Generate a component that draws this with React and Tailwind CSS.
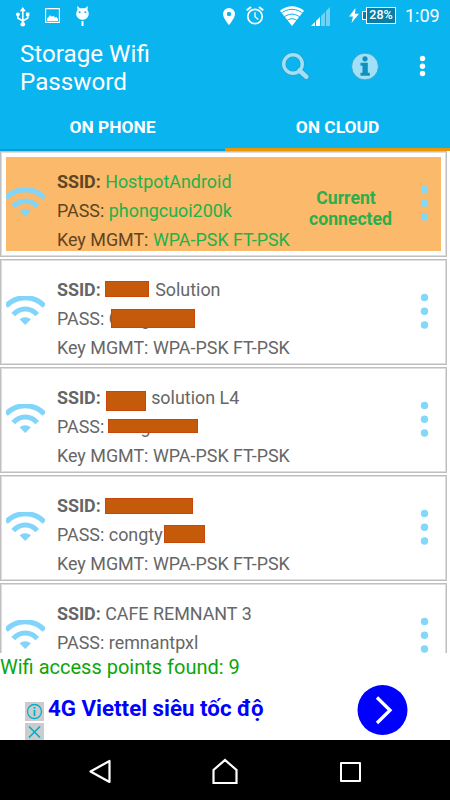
import React from "react";
import clsx from "clsx";

const networks = [
  { id: 1, ssid: "HostpotAndroid", pass: "phongcuoi200k", keyMgmt: "WPA-PSK FT-PSK", current: true },
  {
    id: 2,
    ssid: (
      <>
        <Mask box="left-0 top-[6px] w-[44px] h-[16px]" width="w-[44px]" />
        <span className="ml-[6px]">Solution</span>
      </>
    ),
    pass: <Mask box="left-[2px] top-[5px] w-[84px] h-[19px]">Cong</Mask>,
    keyMgmt: "WPA-PSK FT-PSK",
  },
  {
    id: 3,
    ssid: (
      <>
        <Mask box="left-[1px] top-[8px] w-[40px] h-[20px]" width="w-[46px]">C</Mask>
        <span>solution L4</span>
      </>
    ),
    pass: <Mask box="left-[-1px] top-[7px] w-[90px] h-[14px]">Cong</Mask>,
    keyMgmt: "WPA-PSK FT-PSK",
  },
  {
    id: 4,
    ssid: <Mask box="left-0 top-[7px] w-[88px] h-[16px]" width="w-[88px]" />,
    pass: (
      <>
        <span>congty</span>
        <Mask box="left-[1px] top-[5px] w-[41px] h-[18px]" width="w-[42px]" />
      </>
    ),
    keyMgmt: "WPA-PSK FT-PSK",
  },
  { id: 5, ssid: "CAFE REMNANT 3", pass: "remnantpxl" },
];

// Solid block that hides a private part of a name or password
function Mask({ box, width, children }) {
  return (
    <span className={clsx("relative inline-block h-[29px] align-top", width)}>
      {children}
      <span className={clsx("absolute border border-[#c8480a] bg-[#c45a0a]", box)} />
    </span>
  );
}

const WifiIcon = () => (
  <svg className="w-[39px] h-[29px] shrink-0" viewBox="0 0 39 29" fill="none" stroke="#81d4fa" strokeWidth="5">
    <path d="M0 10A26.500 26.500 0 0 1 38.500 10" />
    <path d="M7.300 18.700A15.500 15.500 0 0 1 31.200 18.700" />
    <path d="M13.600 23.300A8.500 8.500 0 0 1 24.900 23.300L19.250 29z" fill="#81d4fa" stroke="none" />
  </svg>
);

const StatusBar = () => (
  <div className="flex h-[31px] shrink-0 items-center text-white">
    <svg className="ml-4 mt-[2px] w-[14px] h-5" viewBox="0 0 14 20" fill="none" stroke="currentColor" strokeWidth="1.6">
      <path d="M6.800 3v14M1.800 7.500V11l5 3 5-3V8" />
      <path d="M6.800 0l3 4.200h-6z" fill="currentColor" stroke="none" />
      <circle cx="6.800" cy="17.300" r="2.300" fill="currentColor" stroke="none" />
      <circle cx="1.900" cy="7.300" r="1.900" fill="currentColor" stroke="none" />
      <path d="M10 5.600h3.400v3.600H10z" fill="currentColor" stroke="none" />
    </svg>
    <svg className="ml-[15px] w-[15px] h-[15px]" viewBox="0 0 15 15">
      <path d="M.6.6h13.800v13.800H.6z" fill="none" stroke="currentColor" strokeWidth="1.100" />
      <path d="M2.200 13V10.400L5 7.200l2 1.600 1.400-1 1.500 1.800 1.400-.5 1.700 1.700V13z" fill="currentColor" />
    </svg>
    <svg className="ml-[15px] w-[15px] h-5" viewBox="0 0 15 20">
      <path d="M2 0l3 2.300h5L13 0l-.6 4c2 2.400 1.700 6-.5 8-2.200 2.400-6.600 2.400-8.800 0-2.200-2-2.500-5.600-.5-8z" fill="currentColor" />
      <path d="M6.500 15h2v5h-2z" fill="currentColor" />
      <circle cx="4.600" cy="6.300" r="1" fill="#0ab4ef" />
      <circle cx="10.400" cy="6.300" r="1" fill="#0ab4ef" />
    </svg>
    <svg className="ml-[133px] mt-[2px] w-3 h-[17px]" viewBox="0 0 12 17">
      <path fillRule="evenodd" d="M6 0a6 6 0 0 1 6 6c0 4.300-6 11-6 11S0 10.300 0 6a6 6 0 0 1 6-6zm0 3.800a2.200 2.200 0 1 0 0 4.400 2.200 2.200 0 0 0 0-4.400z" fill="currentColor" />
    </svg>
    <svg className="ml-[11px] w-[18px] h-[19px]" viewBox="0 0 18 19" fill="none" stroke="currentColor" strokeWidth="1.700">
      <circle cx="9" cy="10.500" r="7.200" />
      <path d="M9 6.200v4.600l3.400 2.600" strokeWidth="1.300" />
      <path d="M.7 4.300L5 .9M17.300 4.300L13 .9" strokeWidth="1.900" />
    </svg>
    <svg className="ml-4 mt-[1px] w-6 h-5" viewBox="0 0 24 20">
      <path d="M0 4.800C6.800-1.400 17.200-1.400 24 4.800L12 20z" fill="currentColor" />
      <path d="M0 8.500A16.500 16.500 0 0 1 24 8.500M3 12.200A12 12 0 0 1 21 12.200M6 15.500A7.800 7.800 0 0 1 18 15.500" fill="none" stroke="#0ab4ef" strokeWidth="1" />
    </svg>
    <svg className="ml-[7px] mt-[2px] w-[19px] h-[19px]" viewBox="0 0 19 19" fill="currentColor">
      <path d="M0 19l4-4v4zM5 19v-5l4-4v9z" />
      <path d="M10 19V9l4-4v14zM15 19V4l4-4v19z" opacity=".42" />
    </svg>
    <svg className="ml-[19px] w-[10px] h-[15px]" viewBox="0 0 10 15" fill="currentColor">
      <path d="M6.500 0L0 8.500h4L2.500 15 10 5.800H6z" />
    </svg>
    <div className="ml-[3px] flex items-center">
      <div className="h-[9px] w-[4px] border border-r-0 border-white bg-[#087ea7]" />
      <div className="flex h-[17px] w-[30px] items-center justify-center border border-white bg-[#087ea7] text-[12.5px] font-medium">
        28%
      </div>
    </div>
    <span className="ml-[9px] mt-px text-[18px] leading-[20px]">1:09</span>
  </div>
);

const AppBar = () => (
  <header className="flex h-[151px] shrink-0 flex-col bg-[#0ab4ef]">
    <StatusBar />
    <div className="flex h-[73px] pt-[9px] text-white">
      <h1 className="w-[180px] pl-5 text-[24.2px] leading-[28px]">Storage Wifi Password</h1>
      <svg className="ml-[102px] mt-[12px] h-[29px] w-[28px]" viewBox="0 0 28 29" fill="none">
        <path d="M17.500 18.500l6.800 6.300" stroke="#3497b8" strokeWidth="6" strokeLinecap="round" />
        <circle cx="11" cy="12" r="9.300" stroke="#3497b8" strokeWidth="4.600" />
        <path d="M17.500 18.500l6.800 6.300" stroke="#9fe1f9" strokeWidth="4.600" strokeLinecap="round" />
        <circle cx="11" cy="12" r="9.300" stroke="#9fe1f9" strokeWidth="3.400" />
      </svg>
      <svg className="ml-[41px] mt-[12px] h-[29px] w-[28px]" viewBox="0 0 28 29">
        <circle cx="14" cy="14.500" r="13.400" fill="#9fe1f9" stroke="#3497b8" strokeWidth=".8" />
        <circle cx="14" cy="6.800" r="2.600" fill="#1290bd" />
        <path d="M9.500 10.800h7.300v10h2v2.900H9.500v-2.900h2v-7.100h-2z" fill="#1290bd" />
      </svg>
      <svg className="ml-[40px] mt-[15px] h-[22px] w-[7px]" viewBox="0 0 7 22" fill="#fff">
        <circle cx="3.500" cy="3.500" r="2.700" />
        <circle cx="3.500" cy="11.200" r="2.700" />
        <circle cx="3.500" cy="18.500" r="2.700" />
      </svg>
    </div>
    <nav className="flex h-[47px] text-[17.4px] font-bold text-white">
      <button className="flex flex-1 items-center justify-center border-b-2 border-[#079dd0] pt-px">ON PHONE</button>
      <button className="flex flex-1 items-center justify-center border-b-[3px] border-[#e8960c] pt-[2px]">ON CLOUD</button>
    </nav>
  </header>
);

const NetworkCard = ({ network }) => {
  const { ssid, pass, keyMgmt, current } = network;
  return (
    <li className="h-[106px] w-[447px] shrink-0 border border-[#bfbfbf] p-[5px] shadow-[inset_0_0_0_1px_#dedede]">
      <div className={clsx("flex h-[94px]", current ? "bg-[#fab96b] text-[#5f4522]" : "text-[#666]")}>
        <div className="pt-[31px]">
          <WifiIcon />
        </div>
        <div className="ml-3 w-[244px] whitespace-nowrap pt-[10px] text-[17.9px] leading-[29px]">
          <div className="h-[29px]">
            <b className="tracking-[-0.05px]">SSID:</b> <span className={clsx(current && "text-[#21b24b]")}>{ssid}</span>
          </div>
          <div className="h-[29px]">
            PASS: <span className={clsx(current && "text-[#21b24b]")}>{pass}</span>
          </div>
          {keyMgmt && (
            <div className="h-[29px]">
              Key MGMT: <span className={clsx(current && "text-[#21b24b]")}>{keyMgmt}</span>
            </div>
          )}
        </div>
        <div className="w-[99px] pt-[31px] text-center text-[17.6px] font-bold leading-[21px] text-[#2bae4c]">
          {current && (
            <>
              <div className="pr-[9px]">Current</div>
              <div>connected</div>
            </>
          )}
        </div>
        <svg className="ml-[20px] mt-[28px] h-[36px] w-[9px]" viewBox="0 0 9 36" fill="#81d8f8">
          <circle cx="4.500" cy="4.500" r="3.700" />
          <circle cx="4.500" cy="18.300" r="3.700" />
          <circle cx="4.500" cy="32" r="3.700" />
        </svg>
      </div>
    </li>
  );
};

const AdBanner = () => (
  <div className="flex h-[60px] shrink-0 bg-white">
    <div className="ml-[25px] flex w-[19px] flex-col gap-[2px] pt-[22px]">
      <svg className="h-[19px] w-[19px] bg-[#ccc]" viewBox="0 0 19 19" fill="none" stroke="#00aecd">
        <circle cx="9.500" cy="9.500" r="7" strokeWidth="1.300" />
        <path d="M9.500 8v6M9.500 5v1.700" strokeWidth="1.700" />
      </svg>
      <svg className="h-[17px] w-[19px] bg-[#ccc]" viewBox="0 0 19 17" fill="none" stroke="#00aecd" strokeWidth="1.600">
        <path d="M4 3.500l11 11M15 3.500l-11 11" />
      </svg>
    </div>
    <span className="ml-1 w-[309px] whitespace-nowrap pt-[14px] text-[22.3px] font-bold leading-[28px] text-[#00f]">
      4G Viettel siêu tốc độ
    </span>
    <svg className="mt-[5px] h-[50px] w-[51px]" viewBox="0 0 51 50">
      <circle cx="25.500" cy="25" r="25" fill="#00f" />
      <path d="M20 12.500L33 25.300 20 38" fill="none" stroke="#fff" strokeWidth="3.300" />
    </svg>
  </div>
);

const NavigationBar = () => (
  <div className="flex h-[60px] shrink-0 items-center bg-black pt-1">
    <svg className="ml-[88px] h-[26px] w-[24px]" viewBox="0 0 24 26" fill="none" stroke="#fff" strokeWidth="2.200">
      <path d="M21.500 2v21L2.500 12.500z" strokeLinejoin="round" />
    </svg>
    <svg className="ml-[99px] h-[28px] w-[28px]" viewBox="0 0 28 28" fill="none" stroke="#fff" strokeWidth="2.200">
      <path d="M2.500 25V12L14 2 25.500 12v13z" />
    </svg>
    <div className="ml-[101px] h-[20px] w-[21px] rounded-[1px] border-2 border-white" />
  </div>
);

const App = () => {
  return (
    <div className="flex h-[800px] w-[450px] flex-col overflow-hidden bg-white font-['Roboto','Liberation_Sans',sans-serif]">
      <AppBar />
      <ul className="flex h-[502px] shrink-0 flex-col gap-[2px] overflow-hidden">
        {networks.map((network) => (
          <NetworkCard key={network.id} network={network} />
        ))}
      </ul>
      <p className="h-[27px] shrink-0 text-[20px] leading-[28px] text-[#0ca50c]">
        Wifi access points found: 9
      </p>
      <AdBanner />
      <NavigationBar />
    </div>
  );
};

export default App;
